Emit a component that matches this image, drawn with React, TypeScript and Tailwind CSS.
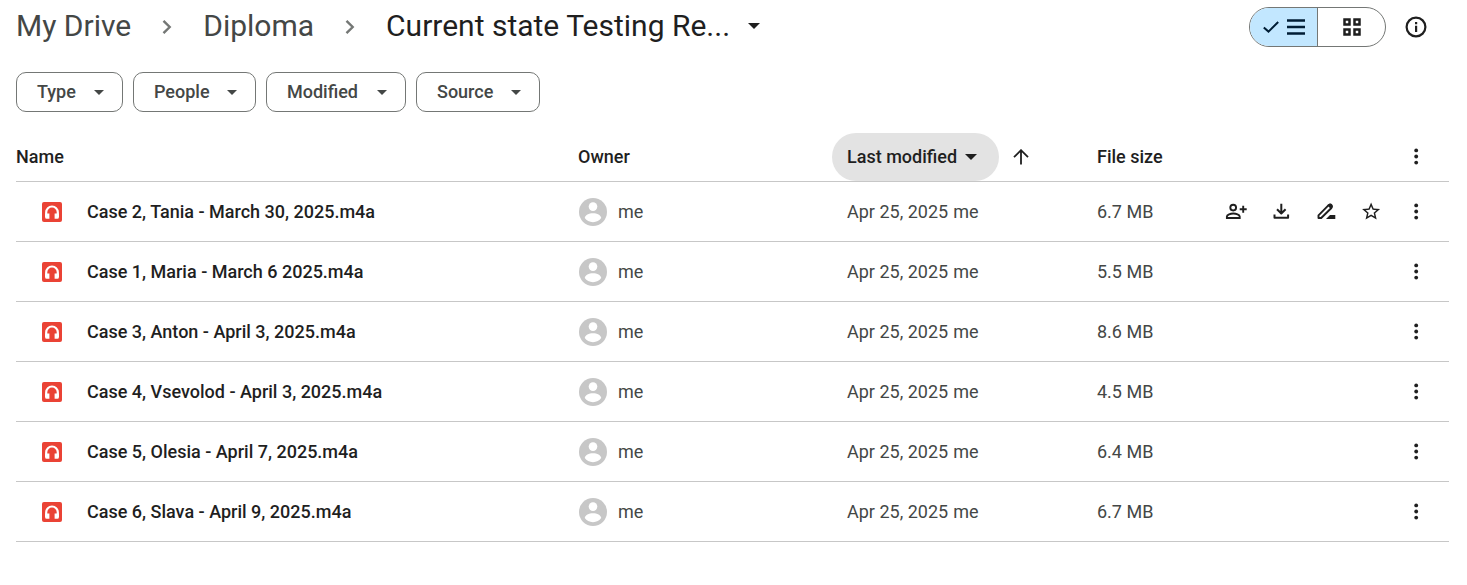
import type { ReactNode } from 'react';

type AudioFile = { name: string; owner: string; modified: string; size: string; active?: boolean };

const files: AudioFile[] = [
  { name: 'Case 2, Tania - March 30, 2025.m4a', owner: 'me', modified: 'Apr 25, 2025', size: '6.7 MB', active: true },
  { name: 'Case 1, Maria - March 6 2025.m4a', owner: 'me', modified: 'Apr 25, 2025', size: '5.5 MB' },
  { name: 'Case 3, Anton - April 3, 2025.m4a', owner: 'me', modified: 'Apr 25, 2025', size: '8.6 MB' },
  { name: 'Case 4, Vsevolod - April 3, 2025.m4a', owner: 'me', modified: 'Apr 25, 2025', size: '4.5 MB' },
  { name: 'Case 5, Olesia - April 7, 2025.m4a', owner: 'me', modified: 'Apr 25, 2025', size: '6.4 MB' },
  { name: 'Case 6, Slava - April 9, 2025.m4a', owner: 'me', modified: 'Apr 25, 2025', size: '6.7 MB' },
];

const filters = [
  { label: 'Type', width: 'w-[107px]' },
  { label: 'People', width: 'w-[123px]' },
  { label: 'Modified', width: 'w-[140px]' },
  { label: 'Source', width: 'w-[124px]' },
];

function Caret({ className }: { className: string }) {
  return (
    <svg viewBox="0 0 12 6" className={className} fill="currentColor" aria-hidden="true">
      <path d="M0 0h12L6 6z" />
    </svg>
  );
}

function Crumb() {
  return (
    <svg viewBox="0 0 10 16" className="h-4 w-[10px] shrink-0 text-[#747775]" fill="none" stroke="currentColor" strokeWidth="2.4" aria-hidden="true">
      <path d="M1.5 1.8L7.700 8l-6.200 6.200" />
    </svg>
  );
}

function IconButton({ label, children }: { label: string; children: ReactNode }) {
  return (
    <button type="button" aria-label={label} className="flex size-6 shrink-0 items-center justify-center text-[#1f1f1f]">
      <svg viewBox="0 0 24 24" className="size-6" fill="currentColor" aria-hidden="true">
        {children}
      </svg>
    </button>
  );
}

function Dots() {
  return (
    <>
      <circle cx="12.200" cy="5.400" r="1.900" />
      <circle cx="12.200" cy="11.500" r="1.900" />
      <circle cx="12.200" cy="17.600" r="1.900" />
    </>
  );
}

function AudioIcon() {
  return (
    <svg viewBox="0 0 20 20" className="size-5 shrink-0" aria-hidden="true">
      <rect width="20" height="20" rx="2" fill="#ea4335" />
      <path d="M4.200 15v-4.700a5.800 5.800 0 0 1 11.600 0V15" fill="none" stroke="#fff" strokeWidth="2.200" />
      <path d="M3.100 11.500h4.300v5.300H4.600q-1.500 0-1.500-1.500zM12.600 11.500h4.300v3.800q0 1.500-1.500 1.500h-2.800z" fill="#fff" />
    </svg>
  );
}

function Avatar() {
  return (
    <svg viewBox="0 0 28 28" className="size-7 shrink-0" aria-hidden="true">
      <circle cx="14" cy="14" r="14" fill="#c7c7c7" />
      <circle cx="14" cy="8.600" r="4.300" fill="#fff" />
      <path d="M5.800 20.100c0-2.900 4.300-4.900 8.200-4.900s8.200 2 8.200 4.900c-1.700 2.500-4.700 4.100-8.200 4.100s-6.500-1.600-8.200-4.100z" fill="#fff" />
    </svg>
  );
}

export default function App() {
  return (
    <main className="bg-white pr-[18px] pl-4 font-['Roboto',sans-serif] text-lg text-[#444746]">
      <header className="flex items-center justify-between pt-[7px] pr-[21px]">
        <nav aria-label="Breadcrumb" className="flex h-10 items-center pb-0.5 text-3xl">
          <a href="#drive">My Drive</a>
          <span className="flex w-[72px] justify-center pt-0.5"><Crumb /></span>
          <a href="#diploma">Diploma</a>
          <span className="flex w-[72px] justify-center pt-0.5"><Crumb /></span>
          <button type="button" className="flex items-center gap-[18px] text-[#1f1f1f]">
            Current state Testing Re...
            <Caret className="h-[6px] w-3" />
          </button>
        </nav>
        <div className="flex items-center gap-[18px]">
          <div className="flex h-10 w-[137px] overflow-hidden rounded-full border border-[#747775]">
            <button type="button" aria-label="List layout" aria-pressed="true" className="flex w-[68px] items-center justify-center gap-2 border-r border-[#747775] bg-[#c2e7ff] text-[#001d35]">
              <svg viewBox="0 0 16 12" className="h-3 w-4" fill="none" stroke="currentColor" strokeWidth="2" aria-hidden="true">
                <path d="M.8 6.400l4.700 4.200L15.200 1" />
              </svg>
              <svg viewBox="0 0 18 16" className="h-4 w-[18px]" fill="none" stroke="currentColor" strokeWidth="2.400" aria-hidden="true">
                <path d="M0 1.500h18M0 8h18M0 14.500h18" />
              </svg>
            </button>
            <button type="button" aria-label="Grid layout" aria-pressed="false" className="flex flex-1 items-center justify-center text-[#1f1f1f]">
              <svg viewBox="0 0 18 18" className="size-[18px]" fill="none" stroke="currentColor" strokeWidth="2.500" aria-hidden="true">
                <path d="M1.500 1.500h5v5h-5zM11.500 1.500h5v5h-5zM1.500 11.500h5v5h-5zM11.500 11.500h5v5h-5z" />
              </svg>
            </button>
          </div>
          <IconButton label="View details">
            <circle cx="12" cy="12" r="9.400" fill="none" stroke="currentColor" strokeWidth="2.200" />
            <path d="M11 10.800h2.200V17H11zM11 7h2.200v2.200H11z" />
          </IconButton>
        </div>
      </header>

      <div className="mt-[25px] flex gap-[10px]">
        {filters.map((f) => (
          <button key={f.label} type="button" className={`flex h-10 items-center justify-between rounded-[10px] border border-[#747775] pr-[18px] pl-5 font-medium ${f.width}`}>
            {f.label}
            <Caret className="h-[5px] w-[10px]" />
          </button>
        ))}
      </div>

      <table className="mt-[21px] w-full table-fixed border-separate border-spacing-0">
        <thead>
          <tr className="text-left text-[#1f1f1f] *:h-[49px] *:border-b *:border-[#c7c7c7] *:p-0 *:font-medium">
            <th scope="col">Name</th>
            <th scope="col" className="w-[254px]">Owner</th>
            <th scope="col" className="w-[265px]">
              <div className="flex items-center gap-[14px]">
                <button type="button" className="flex h-12 w-[167px] items-center gap-2 rounded-full bg-[#e3e3e3] pl-[15px]">
                  Last modified
                  <Caret className="h-[6px] w-3" />
                </button>
                <button type="button" aria-label="Reverse sort direction">
                  <svg viewBox="0 0 16 16" className="size-4" fill="none" stroke="currentColor" strokeWidth="1.800" aria-hidden="true">
                    <path d="M8 15.500V1.500M1 8.200l7-7 7 7" />
                  </svg>
                </button>
              </div>
            </th>
            <th scope="col" className="w-[107px]">File size</th>
            <th scope="col" className="w-[245px]">
              <div className="flex justify-end pr-[21px]">
                <IconButton label="More options"><Dots /></IconButton>
              </div>
            </th>
          </tr>
        </thead>
        <tbody>
          {files.map((f) => (
            <tr key={f.name} className="*:h-[60px] *:border-b *:border-[#c7c7c7] *:p-0">
              <td>
                <div className="flex items-center gap-[25px] pl-[26px] font-medium text-[#1f1f1f]">
                  <AudioIcon />
                  <span className="truncate">{f.name}</span>
                </div>
              </td>
              <td>
                <div className="flex items-center gap-[11px] pl-px">
                  <Avatar />
                  {f.owner}
                </div>
              </td>
              <td>
                <div className="flex gap-[5px] pl-[15px]">
                  <span>{f.modified}</span>
                  <span>{f.owner}</span>
                </div>
              </td>
              <td>{f.size}</td>
              <td>
                <div className="flex justify-end gap-[21px] pr-[21px]">
                  {f.active && (
                    <>
                      <IconButton label="Share">
                        <g fill="none" stroke="currentColor" strokeWidth="1.900">
                          <circle cx="9.200" cy="7.600" r="2.900" />
                          <path d="M2.900 18v-1.500c0-1.900 3.600-3 6.400-3s6.400 1.100 6.400 3V18zM19.200 5.800v7M15.700 9.300h7" />
                        </g>
                      </IconButton>
                      <IconButton label="Download">
                        <path d="M5.500 14.500v3.200h13.600v-3.200M12.300 3.700v9.500M8 9.200l4.300 4.300 4.300-4.300" fill="none" stroke="currentColor" strokeWidth="2" strokeLinejoin="round" />
                      </IconButton>
                      <IconButton label="Rename">
                        <path d="M4.500 18v-2.700L14.600 5.200a2 2 0 0 1 2.800 2.800L7.200 18z" fill="none" stroke="currentColor" strokeWidth="1.900" strokeLinejoin="round" />
                        <path d="M13.200 5.200l1-.8c2.800-2.400 6.200 1.200 3.700 4l-.8.900zM12 19l4-4h5.300v4z" />
                      </IconButton>
                      <IconButton label="Add to starred">
                        <path transform="translate(1.300 .7) scale(.9)" d="M22 9.240l-7.190-.620L12 2 9.190 8.630 2 9.240l5.460 4.730L5.820 21 12 17.270 18.180 21l-1.630-7.030L22 9.240zM12 15.400l-3.760 2.270 1-4.280-3.320-2.880 4.380-.380L12 6.100l1.710 4.040 4.380.380-3.320 2.880 1 4.280L12 15.400z" />
                      </IconButton>
                    </>
                  )}
                  <IconButton label="More actions"><Dots /></IconButton>
                </div>
              </td>
            </tr>
          ))}
        </tbody>
      </table>
    </main>
  );
}
